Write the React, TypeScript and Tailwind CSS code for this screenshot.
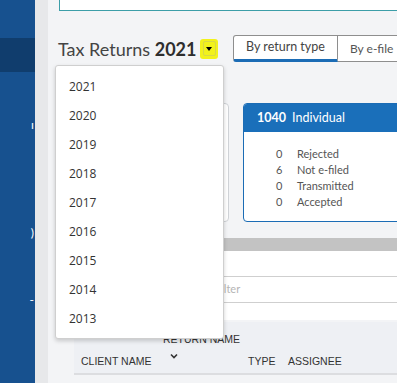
function SideItem({ label, top }: { label: string; top: string }) {
  return (
    <div className={`flex justify-end pr-[1px] text-[12px] leading-[18px] text-white ${top}`}>
      <span>{label}</span>
    </div>
  );
}

const years = ["2021", "2020", "2019", "2018", "2017", "2016", "2015", "2014", "2013"];

const stats = [
  { n: "0", label: "Rejected" },
  { n: "6", label: "Not e-filed" },
  { n: "0", label: "Transmitted" },
  { n: "0", label: "Accepted" },
];

export default function App() {
  return (
    <div className="flex h-[383px] w-[397px] overflow-hidden font-['Lato',sans-serif] text-[#333]">
      <aside className="flex w-[35px] shrink-0 flex-col bg-[#17518f]">
        <div className="h-[38px]" />
        <div className="h-[34px] bg-[#103d6d]" />
        <SideItem label="ı" top="mt-[44px]" />
        <SideItem label=")" top="mt-[90px]" />
        <SideItem label="-" top="mt-[49px]" />
      </aside>
      <div className="w-[13px] shrink-0 bg-[#e7e8ea]" />

      <main className="relative min-w-0 flex-1 bg-[#f3f4f6]">
        <div className="ml-[11px] h-[11px] w-[400px] border-x border-b border-[#3c9ea8] bg-white" />

        <div className="mt-[24px] flex h-[27px] items-center pl-[10px]">
          <h1 className="w-[142px] shrink-0 whitespace-nowrap text-[18px] leading-none text-[#444]">
            Tax Returns <span className="font-bold text-[#2e2e2e]">2021</span>
          </h1>
          <div className="flex h-[20px] w-[18px] shrink-0 items-center justify-center rounded-[3px] bg-[#f2f21c]">
            <div className="flex h-[15px] w-[13px] items-center justify-center rounded-[2px] border border-[#d8d84a]">
              <span className="h-0 w-0 border-x-[3px] border-t-[4px] border-x-transparent border-t-black" />
            </div>
          </div>
          <div className="ml-[15px] flex h-[27px] shrink-0">
            <button className="w-[105px] shrink-0 rounded-l-[3px] border border-b-[3px] border-[#8e8e8e] border-b-[#1b6cb5] bg-white text-[12.5px] text-[#444]">
              By return type
            </button>
            <button className="w-[60px] shrink-0 whitespace-nowrap border border-l-0 border-r-0 border-[#8e8e8e] bg-white pl-[12px] text-left text-[12px] text-[#555]">
              By e-file
            </button>
          </div>
        </div>

        <div className="mt-[41px] flex h-[119px] gap-[14px] pl-[7px]">
          <div className="w-[174px] shrink-0 rounded-[4px] border border-[#cfd2d6] bg-white" />
          <div className="w-[170px] shrink-0 overflow-hidden rounded-[4px] border border-[#1b6cb5] bg-white">
            <div className="flex h-[28px] items-center bg-[#1a6fba] pl-[13px] text-[12.5px] text-white">
              <span className="font-bold">1040</span>
              <span className="ml-[6px]">Individual</span>
              <span className="ml-auto mr-[-7px] h-[13px] w-[13px] rounded-full bg-white" />
            </div>
            <div className="pl-[32px] pt-[14px] text-[11px] leading-[16px] text-[#555]">
              {stats.map((s) => (
                <div key={s.label} className="flex">
                  <span className="w-[21px]">{s.n}</span>
                  <span>{s.label}</span>
                </div>
              ))}
            </div>
          </div>
        </div>

        <div className="ml-[7px] mt-[16px] h-[13px] bg-[#c3c3c3]" />
        <div className="ml-[7px] h-[69px] bg-white">
          <div className="h-[26px] border-b border-[#cfcfcf]" />
          <div className="flex h-[26px] items-center border-b border-[#cfcfcf] pl-[160px] text-[11px] text-[#b5b5b5]">
            Filter
          </div>
        </div>

        <div className="ml-[26px] mt-[2px] flex h-[53px] items-end border-b-2 border-[#dcdde0] bg-[#eef0f4] pb-[3px] pl-[7px] font-['Liberation_Sans',sans-serif] text-[10.5px] uppercase text-[#333]">
          <div className="w-[82px] shrink-0">Client Name</div>
          <div className="flex w-[85px] shrink-0 flex-col">
            <span className="mb-[5px]">Return Name</span>
            <svg className="mb-[11px] ml-[7px]" width="8" height="6" viewBox="0 0 8 6">
              <path d="M1 1.5 4 4.5 7 1.5" fill="none" stroke="#333" strokeWidth="1.6" />
            </svg>
          </div>
          <div className="w-[40px] shrink-0">Type</div>
          <div>Assignee</div>
        </div>

        <div className="absolute left-[7px] top-[65px] w-[169px] rounded-[3px] border border-[#cfcfcf] bg-white pb-[5px] pt-[6px] shadow-[0_2px_4px_rgba(0,0,0,0.18)]">
          {years.map((y) => (
            <div key={y} className="flex h-[29px] items-center pl-[13px] font-['Open_Sans',sans-serif] text-[12px] text-[#333]">
              {y}
            </div>
          ))}
        </div>
      </main>
    </div>
  );
}
